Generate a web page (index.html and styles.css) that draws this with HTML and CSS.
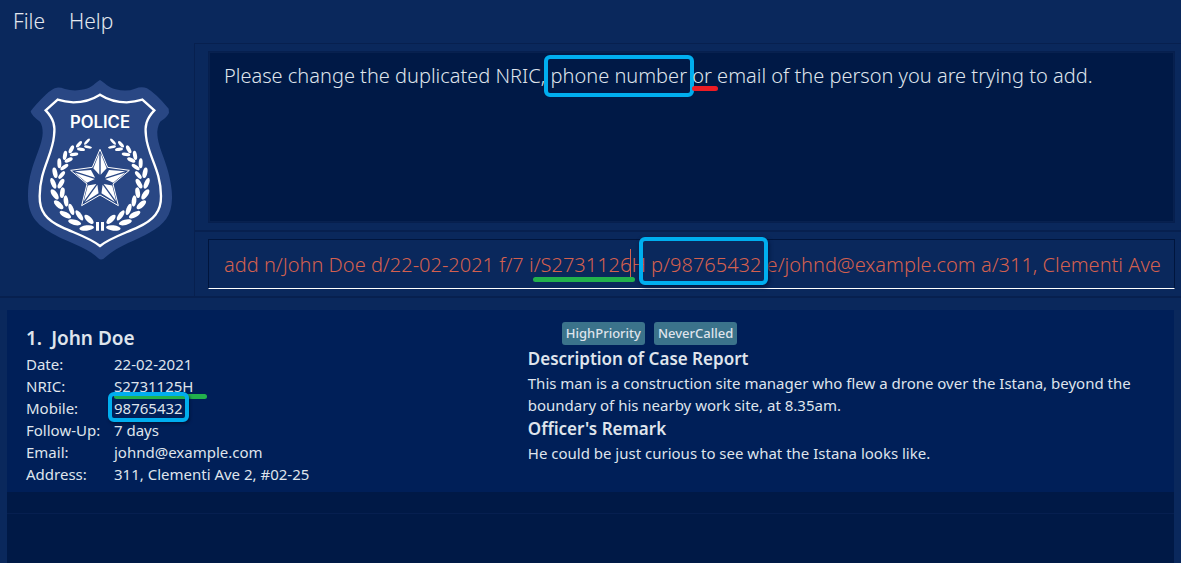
FILE: index.html
```html
<!DOCTYPE html>
<html lang="en">
<head>
<meta charset="utf-8">
<title>Case records</title>
<link rel="stylesheet" href="styles.css">
</head>
<body>
<nav class="menu">
  <button type="button" class="menu-item">File</button>
  <button type="button" class="menu-item">Help</button>
</nav>
<main class="app">
  <section class="top">
    <div class="brand">
      <svg class="badge" viewBox="84 60 432 540" role="img" aria-label="Police badge">
        <defs>
          <g id="laurel" fill="#fff">
            <ellipse rx="12" ry="4" transform="translate(261 245) rotate(-48)"/>
            <ellipse rx="12" ry="4" transform="translate(264 261) rotate(12)"/>
            <ellipse rx="12" ry="5" transform="translate(237 253) rotate(-48)"/>
            <ellipse rx="12" ry="5" transform="translate(243 268) rotate(8)"/>
            <ellipse rx="13" ry="6" transform="translate(214 268) rotate(-62)"/>
            <ellipse rx="13" ry="5" transform="translate(222 283) rotate(-8)"/>
            <ellipse rx="14" ry="6" transform="translate(195 286) rotate(-80)"/>
            <ellipse rx="13" ry="6" transform="translate(206 300) rotate(-24)"/>
            <ellipse rx="15" ry="6" transform="translate(178 310) rotate(-92)"/>
            <ellipse rx="14" ry="6" transform="translate(193 321) rotate(-36)"/>
            <ellipse rx="16" ry="7" transform="translate(165 338) rotate(78)"/>
            <ellipse rx="14" ry="6" transform="translate(185 345) rotate(-50)"/>
            <ellipse rx="17" ry="7" transform="translate(160 370) rotate(67)"/>
            <ellipse rx="16" ry="7" transform="translate(183 371) rotate(-60)"/>
            <ellipse rx="18" ry="8" transform="translate(164 403) rotate(55)"/>
            <ellipse rx="16" ry="7" transform="translate(187 398) rotate(-82)"/>
            <ellipse rx="18" ry="8" transform="translate(176 434) rotate(42)"/>
            <ellipse rx="17" ry="7" transform="translate(198 423) rotate(83)"/>
            <ellipse rx="19" ry="8" transform="translate(196 464) rotate(28)"/>
            <ellipse rx="18" ry="7" transform="translate(214 448) rotate(70)"/>
            <ellipse rx="20" ry="8" transform="translate(224 487) rotate(14)"/>
            <ellipse rx="18" ry="7" transform="translate(238 466) rotate(55)"/>
            <ellipse rx="22" ry="8" transform="translate(260 504) rotate(-6)"/>
            <ellipse rx="18" ry="8" transform="translate(267 478) rotate(45)"/>
          </g>
          <g id="ray">
            <path d="M298 280V344L280 325Z" fill="#fff"/>
            <path d="M302 280V344L320 325Z" fill="#fff"/>
          </g>
        </defs>
        <path d="M300 60C313 67 325 83 347 88Q380 96 405 86Q425 78 441 85Q466 99 506 146L507 158Q502 171 482 184Q474 193 472 214C470 263 508 311 515 391C521 456 501 489 448 518C413 539 349 559 316 592Q304 604 294 594C259 560 200 545 164 524C119 500 84 473 84 408C84 320 126 269 128 219Q128 197 120 185Q93 166 92 154Q103 137 137 104Q158 84 171 83Q181 82 195 87Q222 95 253 88C277 83 286 67 300 60Z" fill="#294784"/>
        <path d="M300 104Q264 127 220 127Q195 126 173 119L137 151C162 177 166 199 162 228C157 286 119 331 119 408C118 454 139 481 187 502C226 520 273 535 300 558C327 535 374 520 413 502C461 481 484 454 483 408C483 331 443 286 438 228C434 199 438 177 463 151L427 119Q405 126 380 127Q336 127 300 104Z" fill="none" stroke="#fff" stroke-width="7"/>
        <text class="badge-text" x="300" y="204" text-anchor="middle">POLICE</text>
        <use href="#laurel"/>
        <use href="#laurel" transform="translate(600 0) scale(-1 1)"/>
        <path d="M288 486h9v26h-9zM303 486h9v26h-9z" fill="#fff"/>
        <path d="M300 268L323 322L388 331L339 372L355 437L300 405L245 437L261 372L212 331L277 322Z" fill="none" stroke="#fff" stroke-width="3"/>
        <use href="#ray"/>
        <use href="#ray" transform="rotate(72 300 360)"/>
        <use href="#ray" transform="rotate(144 300 360)"/>
        <use href="#ray" transform="rotate(216 300 360)"/>
        <use href="#ray" transform="rotate(288 300 360)"/>
      </svg>
    </div>
    <div class="console">
      <div class="result-pane">
        <p class="result" role="status">Please change the duplicated NRIC, <span class="mark mark-phone">phone number</span> <span class="mark mark-or">or</span> email of the person you are trying to add.</p>
      </div>
      <div class="command-pane">
        <div class="command">
          <input class="command-input" type="text" aria-label="Command" spellcheck="false" value="add n/John Doe d/22-02-2021 f/7 i/S2731126H p/98765432 e/johnd@example.com a/311, Clementi Ave">
          <span class="caret"></span>
          <span class="command-line"></span>
          <span class="command-box"></span>
        </div>
      </div>
    </div>
  </section>
  <section class="list">
    <article class="card">
      <div class="person">
        <h2 class="name"><span>1.</span><span>John Doe</span></h2>
        <dl class="details">
          <dt>Date:</dt><dd>22-02-2021</dd>
          <dt>NRIC:</dt><dd><span class="mark mark-nric">S2731125H</span></dd>
          <dt>Mobile:</dt><dd><span class="mark mark-mobile">98765432</span></dd>
          <dt>Follow-Up:</dt><dd>7 days</dd>
          <dt>Email:</dt><dd>johnd@example.com</dd>
          <dt>Address:</dt><dd>311, Clementi Ave 2, #02-25</dd>
        </dl>
      </div>
      <div class="report">
        <div class="tags"><span class="tag">HighPriority</span><span class="tag">NeverCalled</span></div>
        <h3 class="heading">Description of Case Report</h3>
        <p class="text">This man is a construction site manager who flew a drone over the Istana, beyond the boundary of his nearby work site, at 8.35am.</p>
        <h3 class="heading">Officer's Remark</h3>
        <p class="text">He could be just curious to see what the Istana looks like.</p>
      </div>
    </article>
    <div class="row-empty"></div>
  </section>
</main>
</body>
</html>
```

FILE: styles.css
```css
* { box-sizing: border-box; }
body {
  margin: 0;
  height: 100vh;
  display: flex;
  flex-direction: column;
  overflow: hidden;
  background: #0a285c;
  color: #dfe4ec;
  font-family: "Noto Sans", "Open Sans", sans-serif;
  font-size: 15px;
  line-height: 22px;
}
h2, h3, p, dl, dd { margin: 0; }

.menu { display: flex; gap: 24px; padding: 6px 13px 7px; }
.menu-item {
  border: 0;
  padding: 0;
  background: none;
  color: #e4e8ef;
  font: 300 21px/30px "Noto Sans", "Open Sans", sans-serif;
}

.app { flex: 1; min-height: 0; display: flex; flex-direction: column; }
.top { display: grid; grid-template-columns: 194px 1fr; border-bottom: 2px solid #07204f; }
.brand { padding: 37px 22px 0 28px; }
.badge { display: block; width: 144px; height: 180px; }
.badge-text { font: 600 50px Inter, sans-serif; fill: #fff; }

.console { border: solid #07204f; border-width: 1px 0 0 1px; }
.result-pane { padding: 7px 6px 7px 13px; border-bottom: 2px solid #07204f; }
.result {
  height: 172px;
  padding: 8px 15px;
  border: 1px solid #061f4e;
  background: #001946;
  box-shadow: inset 0 0 0 1px #08214f;
  font-size: 20px;
  font-weight: 300;
  line-height: 32px;
}
.command-pane { padding: 7px 6px 7px 13px; }
.command { position: relative; }
.command-input {
  display: block;
  width: 100%;
  height: 50px;
  padding: 1px 12px 0 15px;
  border: 1px solid #00153d;
  border-bottom: 1px solid #fff;
  background: transparent;
  color: #d4604f;
  outline: 0;
  font: 300 20px "Noto Sans", "Open Sans", sans-serif;
}
.caret { position: absolute; left: 422px; top: 10px; width: 1px; height: 29px; background: #d4604f; }
.command-line { position: absolute; left: 325px; top: 38px; width: 102px; height: 5px; border-radius: 3px; background: #22b14c; }
.command-box { position: absolute; left: 431px; top: -2px; width: 129px; height: 48px; border: 4px solid #00aeef; border-radius: 6px; box-shadow: 1px 2px 4px #00143c; }

.mark { position: relative; }
.mark::after { content: ""; position: absolute; }
.mark-phone::after { inset: -7px -7px -8px; border: 4px solid #00aeef; border-radius: 6px; }
.mark-or::after { left: 0; right: -6px; bottom: -2px; height: 5px; border-radius: 3px; background: #ed1c24; }
.mark-nric::after { left: 0; right: -14px; bottom: -3px; height: 5px; border-radius: 3px; background: #22b14c; }
.mark-mobile::after { inset: -6px -6px -4px; border: 4px solid #00aeef; border-radius: 6px; box-shadow: 1px 2px 3px #00143c; }

.list { flex: 1; margin: 12px 7px 0; background: #001946; }
.card { display: grid; grid-template-columns: 4fr 5fr; padding: 12px 19px 7px; background: #001f58; }
.name { display: flex; gap: 9px; padding-top: 3px; font-size: 19px; font-weight: 600; line-height: 26px; }
.details { display: grid; grid-template-columns: 88px 1fr; padding-top: 2px; }
.tags { display: flex; gap: 9px; padding: 0 0 1px 34px; }
.tag { padding: 0 4px; border-radius: 3px; background: #3b738b; font-size: 13px; font-weight: 500; line-height: 23px; }
.heading { font-size: 17px; font-weight: 600; line-height: 26px; }
.row-empty { height: 22px; border-bottom: 1px solid #061f50; }
```
